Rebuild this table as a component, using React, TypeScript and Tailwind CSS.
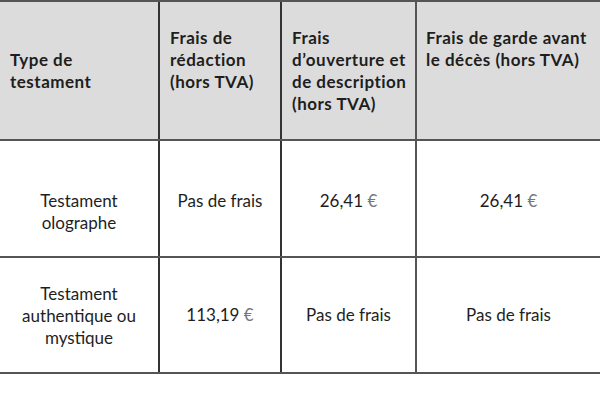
import React from "react";

const font = { fontFamily: "Lato, 'Open Sans', sans-serif" };

function Euro({ v }: { v: string }) {
  return (
    <span>
      {v}
      <span className="text-[#777]"> €</span>
    </span>
  );
}

export default function App() {
  return (
    <div className="w-[600px] h-[400px] bg-white text-[#1e1e1e] text-[17px] leading-[22px]" style={font}>
      <div className="grid grid-cols-[158px_122px_135px_185px] border-t-2 border-[#555] bg-[#dcdcdc] h-[141px] border-b-2 border-b-[#555] font-bold tracking-[0.5px]">
        <div className="flex items-center pl-[10px] pt-[1px]">
          <div>Type de<br />testament</div>
        </div>
        <div className="border-l-2 border-[#333] pl-[10px] pt-[25px]">
          Frais de<br />rédaction<br />(hors TVA)
        </div>
        <div className="border-l-2 border-[#333] pl-[10px] pt-[25px]">
          Frais<br />d’ouverture et<br />de description<br />(hors TVA)
        </div>
        <div className="border-l-2 border-[#555] pl-[9px] pt-[25px]">
          Frais de garde avant<br />le décès (hors TVA)
        </div>
      </div>
      <div className="grid grid-cols-[158px_122px_135px_185px] h-[117px] border-b-2 border-[#555] text-center">
        <div className="pt-[49px]">Testament<br />olographe</div>
        <div className="border-l-2 border-[#333] pt-[49px]">Pas de frais</div>
        <div className="border-l-2 border-[#333] pt-[49px]"><Euro v="26,41" /></div>
        <div className="border-l-2 border-[#555] pt-[49px]"><Euro v="26,41" /></div>
      </div>
      <div className="grid grid-cols-[158px_122px_135px_185px] h-[116px] border-b-2 border-[#555] text-center">
        <div className="flex items-center justify-center pt-[2px]">
          <div>Testament<br />authentique ou<br />mystique</div>
        </div>
        <div className="border-l-2 border-[#333] flex items-center justify-center"><Euro v="113,19" /></div>
        <div className="border-l-2 border-[#333] flex items-center justify-center">Pas de frais</div>
        <div className="border-l-2 border-[#555] flex items-center justify-center">Pas de frais</div>
      </div>
    </div>
  );
}
